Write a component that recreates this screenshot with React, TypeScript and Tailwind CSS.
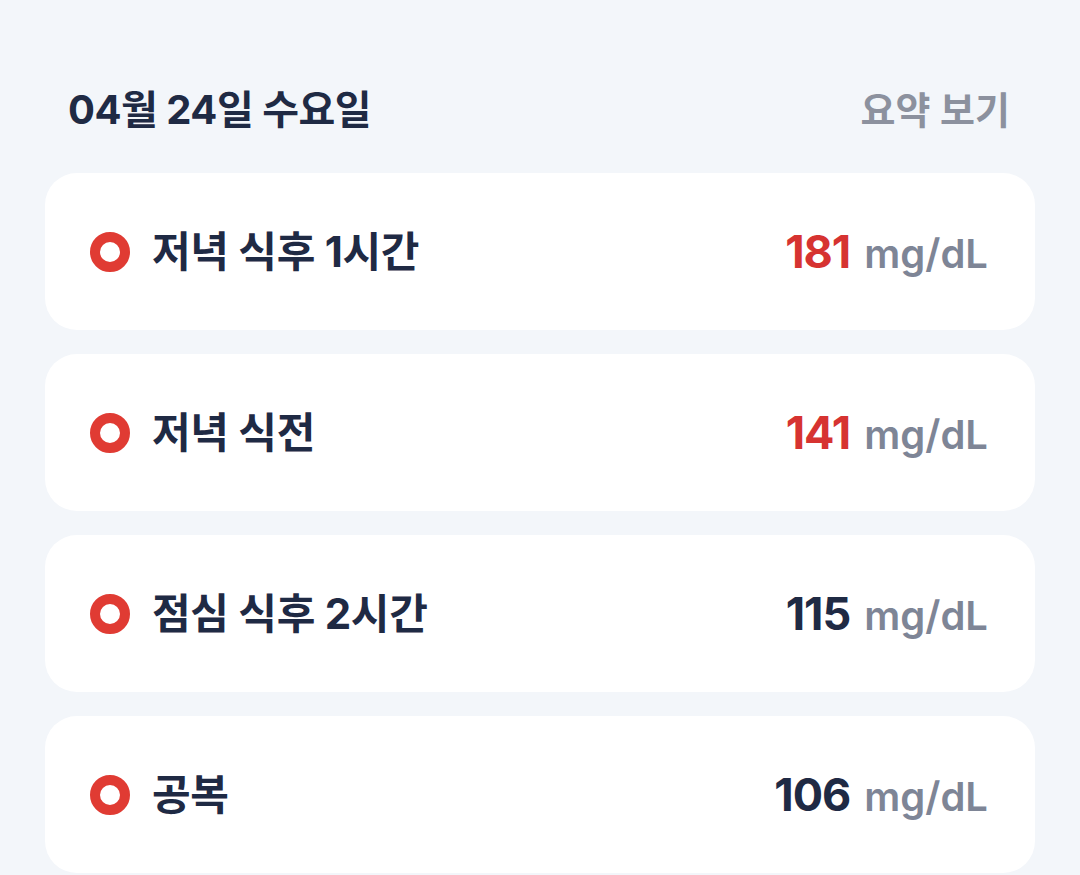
import React from "react";

type Reading = {
  label: string;
  value: number;
  high: boolean;
};

const readings: Reading[] = [
  { label: "저녁 식후 1시간", value: 181, high: true },
  { label: "저녁 식전", value: 141, high: true },
  { label: "점심 식후 2시간", value: 115, high: false },
  { label: "공복", value: 106, high: false },
];

const font = { fontFamily: '"Inter", "Noto Sans CJK KR", sans-serif' };

export default function App() {
  return (
    <div className="min-h-[875px] w-[1080px] overflow-hidden bg-[#f3f6fa]" style={font}>
      <div className="flex flex-col px-[45px] pt-[80px]">
        {/* day header */}
        <div className="flex items-center justify-between pl-[23px] pr-[25px]">
          <h2 className="text-[40px] font-bold tracking-[-0.5px] text-[#1f2a44]">04월 24일 수요일</h2>
          <button className="text-[38px] font-semibold text-[#8c919e]">요약 보기</button>
        </div>

        {/* readings */}
        <div className="mt-[33px] flex flex-col gap-[24px]">
          {readings.map((r) => (
            <div
              key={r.label}
              className="flex h-[157px] items-center justify-between rounded-[32px] bg-white pl-[45px] pr-[47px]"
            >
              <div className="flex items-center gap-[22px]">
                <span className="h-[40px] w-[40px] rounded-full border-[10px] border-[#e03b33]" />
                <span className="text-[42px] font-bold tracking-[-0.3px] text-[#1f2a44]">{r.label}</span>
              </div>
              <div className="flex items-baseline gap-[14px]">
                <span
                  className={`text-[45px] font-bold tracking-[-1px] ${
                    r.high ? "text-[#d63331]" : "text-[#1f2a44]"
                  }`}
                >
                  {r.value}
                </span>
                <span className="text-[40px] font-semibold text-[#7e8596]">mg/dL</span>
              </div>
            </div>
          ))}
        </div>
      </div>
    </div>
  );
}
